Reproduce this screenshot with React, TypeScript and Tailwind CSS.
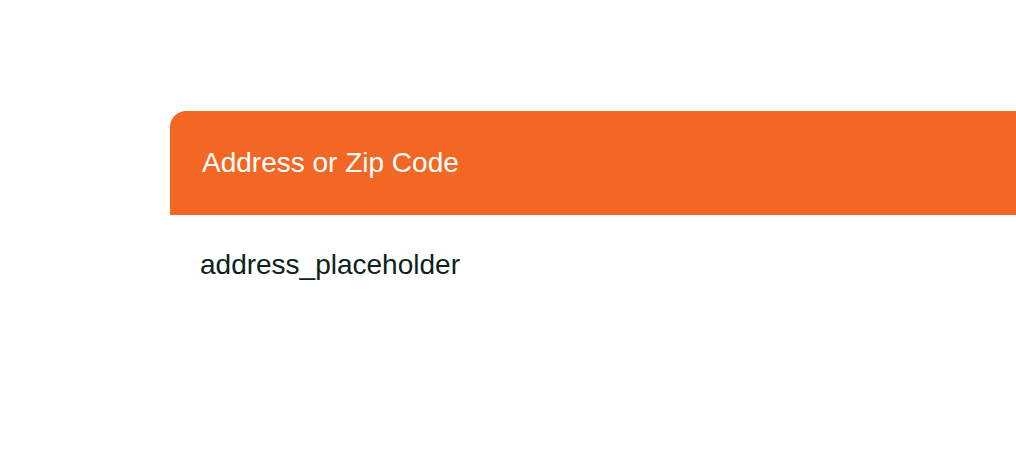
export default function App() {
  return (
    <div className="w-[1016px] h-[452px] bg-white overflow-hidden pt-[111px] pl-[170px]" style={{ fontFamily: '"Liberation Sans", Arial, sans-serif' }}>
      <div className="h-[104px] bg-[#f36724] rounded-tl-2xl flex items-center pl-8">
        <span className="text-[28px] leading-8 text-white">Address or Zip Code</span>
      </div>
      <div className="pt-[34px] pl-[30px] text-[28px] leading-8 text-[#0b231a]">address_placeholder</div>
    </div>
  );
}
